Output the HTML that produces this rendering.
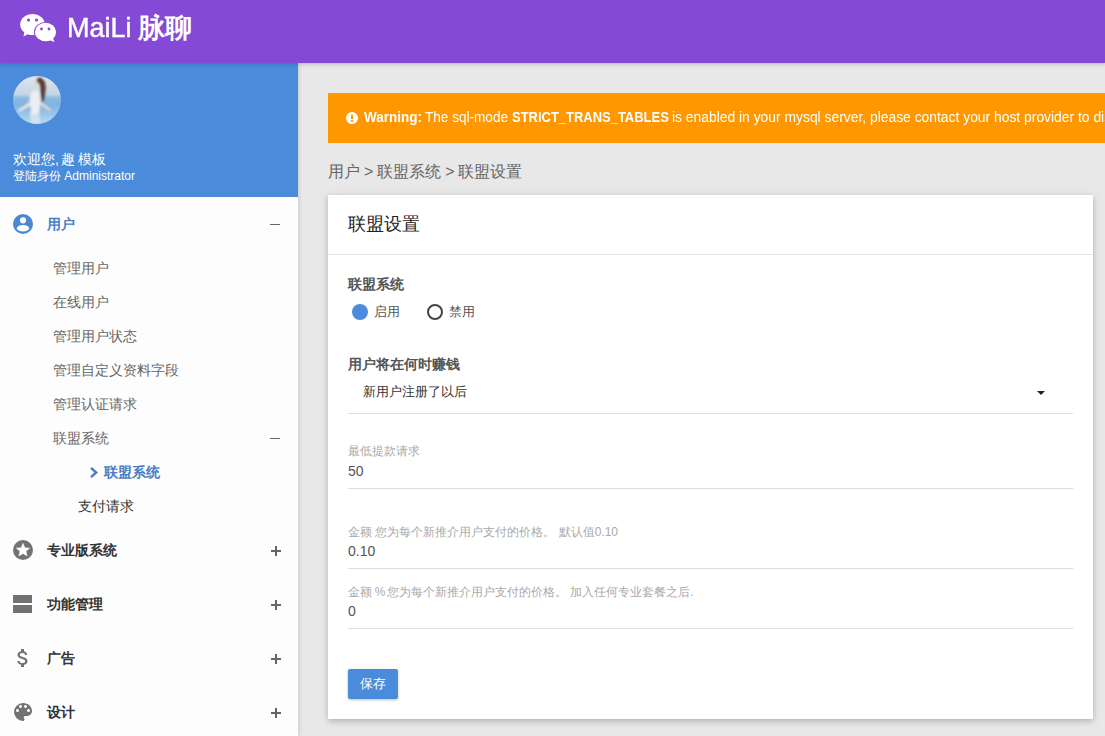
<!DOCTYPE html>
<html><head><meta charset="utf-8">
<style>
*{box-sizing:border-box;margin:0;padding:0}
html,body{width:1105px;height:736px;overflow:hidden}
body{font-family:"Liberation Sans",sans-serif;background:#e8e8e8;position:relative;color:#333}
.a{position:absolute;white-space:nowrap;line-height:1}
#hdr{position:absolute;left:0;top:0;width:1105px;height:63px;background:#8449d5;z-index:3;box-shadow:0 1px 4px rgba(0,0,0,.22)}
#side{position:absolute;left:0;top:63px;width:298px;height:673px;background:#fdfdfd;z-index:2;box-shadow:1px 0 4px rgba(0,0,0,.14)}
#prof{position:absolute;left:0;top:0;width:298px;height:134px;background:#4a8bdb}
.sub{font-size:14px;color:#666}
.top{font-size:14px;font-weight:bold;color:#333}
.pm{position:absolute;background:#666}
#warn{position:absolute;left:328px;top:93px;width:800px;height:50px;background:#ff9800;color:#fff}
#card{position:absolute;left:328px;top:195px;width:765px;height:524px;background:#fff;box-shadow:0 2px 5px rgba(0,0,0,.16),0 2px 10px rgba(0,0,0,.1)}
.line{position:absolute;left:20px;width:725px;height:1px;background:#ddd}
.lbl{font-size:12px;color:#aaa}
.val{font-size:14px;color:#555}
</style></head><body>
<div id="hdr">
  <svg class="a" style="left:20px;top:13px" width="38" height="29" viewBox="0 0 38 29">
    <ellipse cx="12.5" cy="11.5" rx="12.3" ry="10.5" fill="#fff"/>
    <path d="M4.5 18 L3.5 23.5 L10 20 Z" fill="#fff"/>
    <circle cx="8.5" cy="7" r="1.6" fill="#8449d5"/>
    <circle cx="16.5" cy="7" r="1.6" fill="#8449d5"/>
    <ellipse cx="25.5" cy="19" rx="11.5" ry="10" fill="#8449d5"/>
    <ellipse cx="25.5" cy="19" rx="10.6" ry="9.2" fill="#fff"/>
    <path d="M33 25 L34.5 29 L29 27 Z" fill="#fff"/>
    <circle cx="21.5" cy="16" r="1.4" fill="#8449d5"/>
    <circle cx="29" cy="16" r="1.4" fill="#8449d5"/>
  </svg>
  <div class="a" style="left:67px;top:14px;font-size:28px;color:#fff;-webkit-text-stroke:.45px #fff;transform:scaleX(.965);transform-origin:0 0">MaiLi</div><div class="a" style="left:138px;top:15px;font-size:26.5px;font-weight:bold;color:#fff">脉聊</div>
</div>
<div id="side">
  <div id="prof">
    <svg class="a" style="left:13px;top:13px" width="48" height="48" viewBox="0 0 48 48">
      <defs>
        <linearGradient id="sky" x1="0" y1="0" x2="0" y2="1">
          <stop offset="0" stop-color="#dfe6ec"/>
          <stop offset=".38" stop-color="#c3d6e6"/>
          <stop offset=".46" stop-color="#8dbbe2"/>
          <stop offset=".6" stop-color="#7fb4e0"/>
          <stop offset="1" stop-color="#b8d8f2"/>
        </linearGradient>
        <clipPath id="cc"><circle cx="24" cy="24" r="24"/></clipPath>
        <filter id="bl" x="-10%" y="-10%" width="120%" height="120%"><feGaussianBlur stdDeviation="1"/></filter>
      </defs>
      <g clip-path="url(#cc)">
        <rect width="48" height="48" fill="url(#sky)"/>
        <g filter="url(#bl)">
          <path d="M5 34 C9 31 14 28 19 24 L21 27 C16 31 10 34 6 36Z" fill="#ece6e0"/>
          <path d="M26 25 C30 27 35 30 38 34 L36.5 35.5 C33 32 29 30 25 28Z" fill="#e4d8d0"/>
          <path d="M19 15 C16 20 16 27 18 33 L17 40 L19 48 L27 48 L26 38 L27 30 C28 24 27 18 25 14Z" fill="#eceef0"/>
          <path d="M18 38 L18 48 L27 48 L26 38Z" fill="#cfe2f2"/>
          <ellipse cx="24" cy="8.5" rx="2.8" ry="3.4" fill="#e6d4ca"/>
          <path d="M27 1.5 C32 3 33.5 9 32.5 15 C31.5 21 31.5 24 30 27 C28 23 27.5 19 27.5 14 C27.5 9 25.5 6.5 23.5 5.5 C23.5 3 25 1.5 27 1.5Z" fill="#5a3e36"/>
        </g>
      </g>
    </svg>
    <div class="a" style="left:13px;top:89px;font-size:14px;color:#fff;word-spacing:-1.5px">欢迎您, 趣 模板</div>
    <div class="a" style="left:13px;top:107px;font-size:12px;color:#fff">登陆身份 Administrator</div>
  </div>
  <!-- user icon -->
  <svg class="a" style="left:13px;top:151px" width="20" height="20" viewBox="0 0 20 20">
    <circle cx="10" cy="10" r="10" fill="#4a88d6"/>
    <circle cx="10" cy="6.3" r="3.1" fill="#fff"/>
    <ellipse cx="10" cy="14.3" rx="6.1" ry="3.2" fill="#fff"/>
  </svg>
  <div class="a top" style="left:47px;top:154px;color:#4a7dc2">用户</div>
  <div class="pm" style="left:270px;top:161px;width:10px;height:1px"></div>
  <div class="a sub" style="left:53px;top:198px">管理用户</div>
  <div class="a sub" style="left:53px;top:232px">在线用户</div>
  <div class="a sub" style="left:53px;top:266px">管理用户状态</div>
  <div class="a sub" style="left:53px;top:300px">管理自定义资料字段</div>
  <div class="a sub" style="left:53px;top:334px">管理认证请求</div>
  <div class="a sub" style="left:53px;top:368px">联盟系统</div>
  <div class="pm" style="left:270px;top:375px;width:10px;height:1px"></div>
  <svg class="a" style="left:89px;top:403px" width="10" height="13" viewBox="0 0 10 13"><path d="M2 1.8 L7.2 6.5 L2 11.2" fill="none" stroke="#4b7cc0" stroke-width="2.4"/></svg>
  <div class="a sub" style="left:104px;top:402px;font-weight:bold;color:#4a7dc2">联盟系统</div>
  <div class="a sub" style="left:78px;top:436px;color:#333">支付请求</div>
  <!-- top items -->
  <svg class="a" style="left:13px;top:477px" width="20" height="20" viewBox="0 0 20 20">
    <circle cx="10" cy="10" r="10" fill="#727272"/>
    <path d="M10.00 3.40 L11.82 7.79 L16.56 8.17 L12.95 11.26 L14.06 15.88 L10.00 13.40 L5.94 15.88 L7.05 11.26 L3.44 8.17 L8.18 7.79Z" fill="#fff" stroke="#fff" stroke-width=".6" stroke-linejoin="round"/>
  </svg>
  <div class="a top" style="left:47px;top:480px">专业版系统</div>
  <div class="pm" style="left:271px;top:487px;width:10px;height:1.5px"></div>
  <div class="pm" style="left:275px;top:483px;width:1.5px;height:10px"></div>

  <div class="a" style="left:13px;top:532px;width:19px;height:8px;background:#727272"></div>
  <div class="a" style="left:13px;top:542px;width:19px;height:8px;background:#727272"></div>
  <div class="a top" style="left:47px;top:534px">功能管理</div>
  <div class="pm" style="left:271px;top:541px;width:10px;height:1.5px"></div>
  <div class="pm" style="left:275px;top:537px;width:1.5px;height:10px"></div>

  <svg class="a" style="left:10.5px;top:583px" width="24" height="24" viewBox="0 0 24 24"><path fill="#727272" d="M11.8 10.9c-2.27-.59-3-1.2-3-2.150 0-1.09 1.01-1.85 2.7-1.85 1.78 0 2.44.85 2.5 2.1h2.21c-.07-1.720-1.12-3.3-3.21-3.81V3h-3v2.16c-1.94.42-3.5 1.68-3.5 3.61 0 2.31 1.91 3.46 4.7 4.13 2.5.6 3 1.480 3 2.41 0 .69-.49 1.79-2.7 1.79-2.06 0-2.87-.92-2.98-2.1h-2.2c.12 2.19 1.76 3.42 3.68 3.83V21h3v-2.15c1.95-.37 3.5-1.5 3.5-3.55 0-2.84-2.43-3.81-4.7-4.4z"/></svg>
  <div class="a top" style="left:47px;top:588px">广告</div>
  <div class="pm" style="left:271px;top:595px;width:10px;height:1.5px"></div>
  <div class="pm" style="left:275px;top:591px;width:1.5px;height:10px"></div>

  <svg class="a" style="left:11px;top:637px" width="24" height="24" viewBox="0 0 24 24">
    <path fill="#727272" d="M12 3a9 9 0 0 0 0 18c.83 0 1.5-.67 1.5-1.5 0-.39-.15-.74-.39-1.01-.23-.26-.38-.61-.38-.99 0-.83.67-1.5 1.5-1.5H16c2.76 0 5-2.24 5-5 0-4.42-4.03-8-9-8zm-5.5 9c-.83 0-1.5-.67-1.5-1.5S5.67 9 6.5 9 8 9.67 8 10.5 7.33 12 6.5 12zm3-4C8.67 8 8 7.33 8 6.5S8.67 5 9.5 5s1.5.67 1.5 1.5S10.33 8 9.5 8zm5 0c-.83 0-1.5-.67-1.5-1.5S13.67 5 14.5 5s1.5.67 1.5 1.5S15.33 8 14.5 8zm3 4c-.83 0-1.5-.67-1.5-1.5S16.67 9 17.5 9s1.5.67 1.5 1.5-.67 1.5-1.5 1.5z"/>
  </svg>
  <div class="a top" style="left:47px;top:642px">设计</div>
  <div class="pm" style="left:271px;top:649px;width:10px;height:1.5px"></div>
  <div class="pm" style="left:275px;top:645px;width:1.5px;height:10px"></div>
</div>

<div id="warn">
  <svg class="a" style="left:18px;top:19px" width="12" height="12" viewBox="0 0 12 12"><circle cx="6" cy="6" r="6" fill="#fff"/><rect x="5" y="2.5" width="2" height="4.5" fill="#ff9800"/><rect x="5" y="8" width="2" height="1.8" fill="#ff9800"/></svg>
  <div class="a" style="left:36px;top:17px;font-size:14px;font-weight:bold;transform:scaleX(.963);transform-origin:0 0">Warning:</div>
  <div class="a" style="left:97px;top:17px;font-size:14px;transform:scaleX(.97);transform-origin:0 0">The sql-mode</div>
  <div class="a" style="left:184px;top:17px;font-size:14px;font-weight:bold;transform:scaleX(.926);transform-origin:0 0">STRICT_TRANS_TABLES</div>
  <div class="a" style="left:344px;top:17px;font-size:14px;transform:scaleX(.99);transform-origin:0 0">is enabled in your mysql server, please contact your host provider to disable it</div>
</div>
<div class="a" style="left:328px;top:164px;font-size:16px;color:#666;word-spacing:-.5px">用户 &gt; 联盟系统 &gt; 联盟设置</div>

<div id="card">
  <div class="a" style="left:20px;top:20px;font-size:18px;color:#222">联盟设置</div>
  <div class="a" style="left:0;top:59px;width:765px;height:1px;background:#e6e6e6"></div>
  <div class="a" style="left:20px;top:82px;font-size:14px;font-weight:bold;color:#555">联盟系统</div>
  <div class="a" style="left:24px;top:109px;width:16px;height:16px;border-radius:50%;background:#4a8bdb"></div>
  <div class="a" style="left:46px;top:110px;font-size:13px;color:#555">启用</div>
  <div class="a" style="left:99px;top:109px;width:16px;height:16px;border-radius:50%;border:2px solid #444"></div>
  <div class="a" style="left:121px;top:110px;font-size:13px;color:#555">禁用</div>

  <div class="a" style="left:20px;top:162px;font-size:14px;font-weight:bold;color:#555">用户将在何时赚钱</div>
  <div class="a" style="left:35px;top:190px;font-size:13px;color:#333">新用户注册了以后</div>
  <svg class="a" style="left:709px;top:196px" width="8" height="4" viewBox="0 0 8 4"><path d="M0 0H8L4 4Z" fill="#222"/></svg>
  <div class="line" style="top:218px"></div>

  <div class="a lbl" style="left:20px;top:250px">最低提款请求</div>
  <div class="a val" style="left:20px;top:269px">50</div>
  <div class="line" style="top:293px"></div>

  <div class="a lbl" style="left:20px;top:331px">金额 您为每个新推介用户支付的价格。 默认值0.10</div>
  <div class="a val" style="left:20px;top:349px">0.10</div>
  <div class="line" style="top:373px"></div>

  <div class="a lbl" style="left:20px;top:391px;word-spacing:-.5px">金额 <span style="letter-spacing:-1px">%</span> 您为每个新推介用户支付的价格。 加入任何专业套餐之后.</div>
  <div class="a val" style="left:20px;top:409px">0</div>
  <div class="line" style="top:433px"></div>

  <div class="a" style="left:20px;top:474px;width:50px;height:30px;background:#4a8bdb;border-radius:2px;box-shadow:0 1px 3px rgba(0,0,0,.25)"></div>
  <div class="a" style="left:32px;top:482px;font-size:13px;color:#fff">保存</div>
</div>
</body></html>
